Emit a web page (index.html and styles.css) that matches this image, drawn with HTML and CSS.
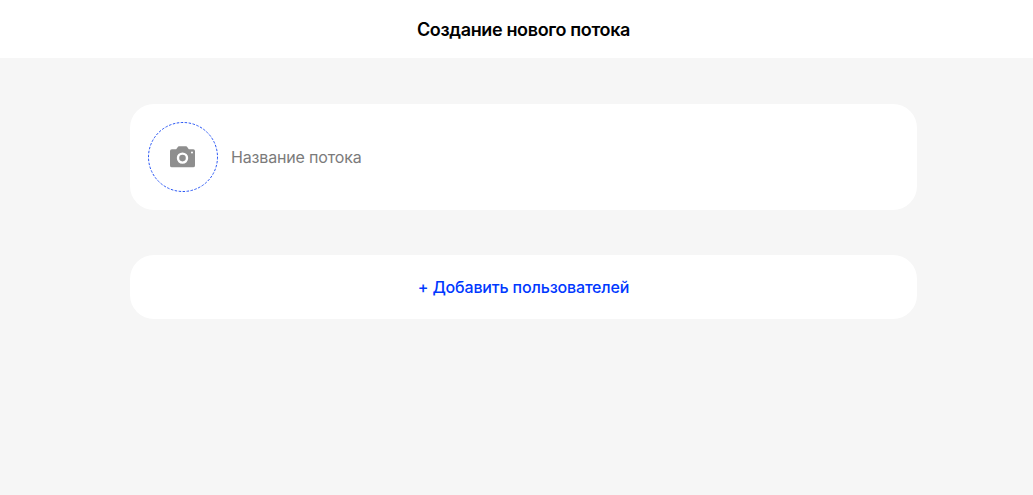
FILE: index.html
```html
<!DOCTYPE html>
<html lang="ru">
<head>
<meta charset="utf-8">
<title>Создание нового потока</title>
<link rel="stylesheet" href="styles.css">
</head>
<body>
<header class="topbar"><h1 class="title">Создание нового потока</h1></header>
<main class="content">
  <section class="card card-name">
    <svg class="avatar" width="70" height="70" viewBox="0 0 70 70" aria-hidden="true">
      <circle cx="35" cy="35" r="34.500" fill="none" stroke="#2a57f5" stroke-width="1" stroke-dasharray="2.500 1.500"/>
      <path transform="translate(21.500 24.200)" fill-rule="evenodd" fill="#8e8e8e" d="M8.500 0.500C9 0 9.500 0 10 0h6c.5 0 1 0 1.500.5L19.300 3h4.200A1.900 1.900 0 0 1 25.500 4.900v14.300a1.900 1.900 0 0 1-1.900 1.900H2.400a1.900 1.900 0 0 1-1.900-1.900V4.900A1.900 1.900 0 0 1 2.400 3H6.700zM13 6.200a5.700 5.700 0 1 0 0 11.400a5.700 5.700 0 0 0 0-11.400zM13 8.600a3.300 3.300 0 1 1 0 6.600a3.300 3.300 0 0 1 0-6.600zM22.500 5.200a1 1 0 1 0 0 2a1 1 0 0 0 0-2z"/>
    </svg>
    <span class="name-placeholder">Название потока</span>
  </section>
  <section class="card card-add">
    <span class="add-link">+ Добавить пользователей</span>
  </section>
</main>
</body>
</html>
```
FILE: styles.css
```css
html, body {
  margin: 0;
  height: 100%;
}
body {
  background: #f6f6f6;
  font-family: Inter, "Liberation Sans", sans-serif;
  overflow: hidden;
}
.topbar {
  height: 58px;
  padding-left: 14px;
  background: #fff;
  display: flex;
  align-items: center;
  justify-content: center;
}
.title {
  margin: 0;
  font-size: 18px;
  font-weight: 600;
  letter-spacing: -0.02em;
  color: #000;
}
.content {
  margin: 46px 116px 0 130px;
  display: flex;
  flex-direction: column;
  gap: 45px;
}
.card {
  background: #fff;
  border-radius: 24px;
  display: flex;
  align-items: center;
}
.card-name {
  height: 106px;
  padding: 0 18px;
  gap: 13px;
}
.card-add {
  height: 64px;
  justify-content: center;
}
.avatar {
  flex: none;
}
.name-placeholder {
  font-size: 16px;
  letter-spacing: -0.01em;
  color: #7b7b7b;
}
.add-link {
  font-size: 16px;
  font-weight: 500;
  letter-spacing: -0.01em;
  color: #0038ff;
}
```
